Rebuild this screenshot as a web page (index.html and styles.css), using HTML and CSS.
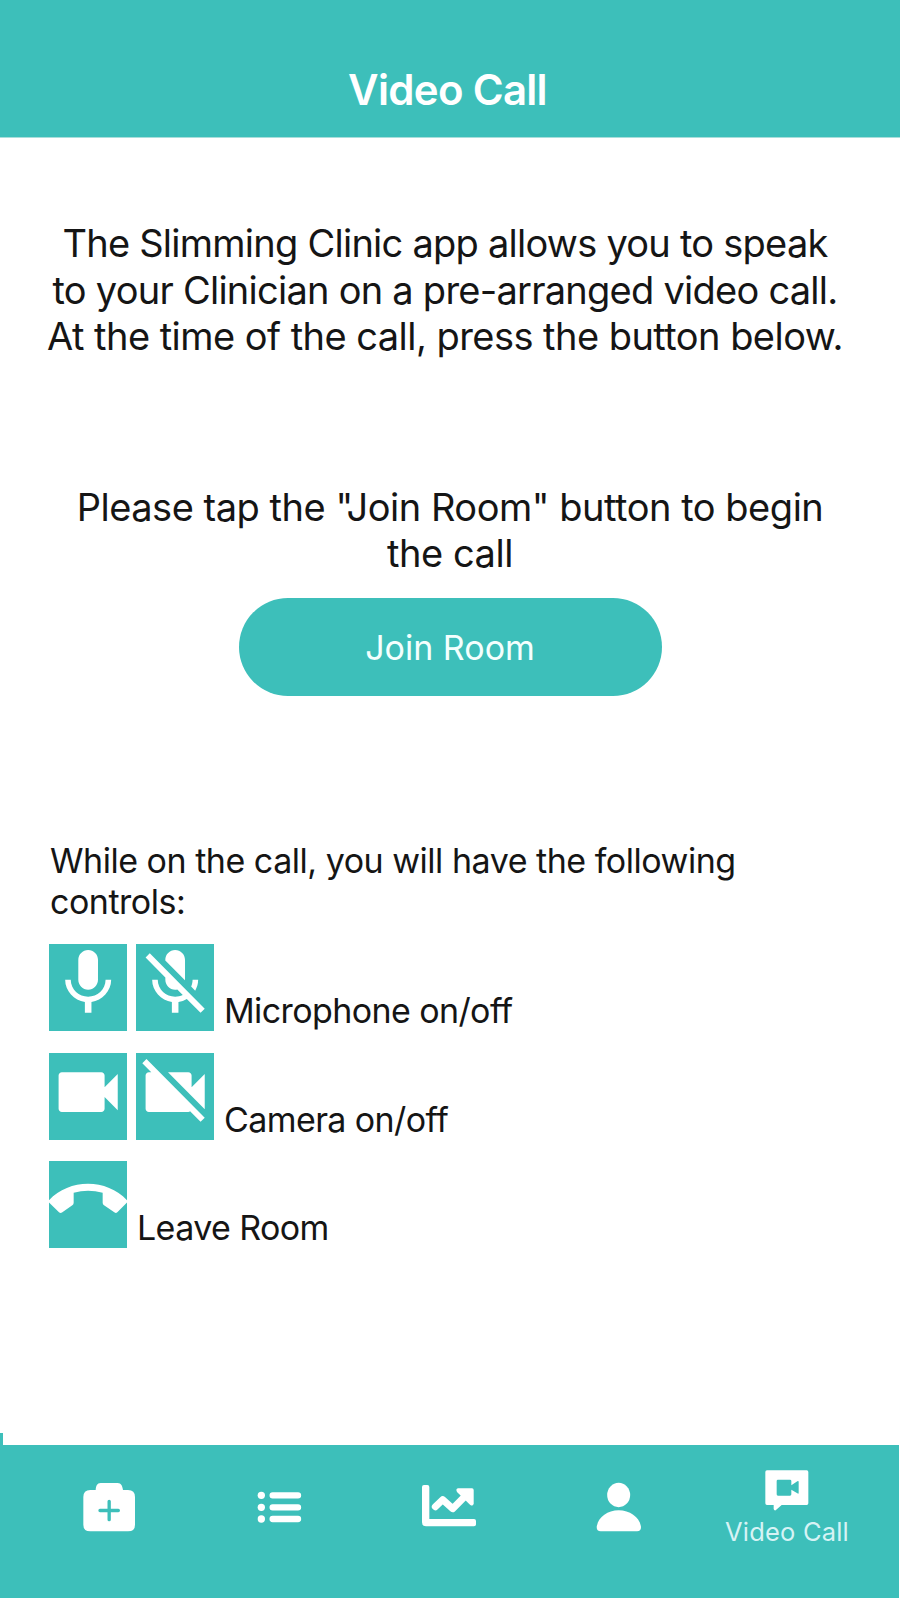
FILE: index.html
```html
<!DOCTYPE html>
<html lang="en">
<head>
<meta charset="utf-8">
<title>Video Call</title>
<link rel="stylesheet" href="styles.css">
</head>
<body>
<div class="screen">
  <header class="header"><h1 class="title">Video Call</h1></header>
  <main class="content">
    <p class="intro">The Slimming Clinic app allows you to speak<br>to your Clinician on a pre-arranged video call.<br><span class="closing">At the time of the call, press the button below.</span></p>
    <p class="prompt">Please tap the "Join Room" button to begin<br>the call</p>
    <button class="join" type="button">Join Room</button>
    <section class="controls">
      <p class="lead">While on the call, you will have the following<br>controls:</p>
      <div class="row">
        <svg class="tile" viewBox=".08 .18 23.74 26.3" preserveAspectRatio="none"><path d="M12 14c1.66 0 2.99-1.34 2.99-3L15 5c0-1.66-1.34-3-3-3S9 3.34 9 5v6c0 1.66 1.34 3 3 3zm5.3-3c0 3-2.54 5.1-5.3 5.1S6.7 14 6.7 11H5c0 3.41 2.72 6.23 6 6.72V21h2v-3.28c3.28-.48 6-3.3 6-6.72h-1.7z"/></svg>
        <svg class="tile" viewBox=".08 .18 23.74 26.3" preserveAspectRatio="none"><path d="M19 11h-1.7c0 .74-.16 1.43-.43 2.05l1.23 1.23c.56-.98.9-2.09.9-3.28zm-4.02.17c0-.06.02-.11.02-.17V5c0-1.66-1.34-3-3-3S9 3.34 9 5v.18l5.98 5.99zM4.27 3L3 4.27l6.01 6.01V11c0 1.66 1.33 3 2.99 3 .22 0 .44-.03.65-.08l1.66 1.66c-.71.33-1.5.52-2.31.52-2.76 0-5.3-2.1-5.3-5.1H5c0 3.41 2.72 6.23 6 6.72V21h2v-3.28c.91-.13 1.77-.45 2.54-.9L19.73 21 21 19.73 4.27 3z"/></svg>
        <span class="label">Microphone on/off</span>
      </div>
      <div class="row">
        <svg class="tile" viewBox=".08 .18 23.74 26.3" preserveAspectRatio="none"><path d="M17 10.500V7c0-.55-.45-1-1-1H4c-.55 0-1 .45-1 1v10c0 .55.45 1 1 1h12c.55 0 1-.45 1-1v-3.500l4 4v-11l-4 4z"/></svg>
        <svg class="tile" viewBox=".08 .18 23.74 26.3" preserveAspectRatio="none"><path d="M21 6.500l-4 4V7c0-.55-.45-1-1-1H9.820L21 17.180V6.500zM3.270 2L2 3.270 4.730 6H4c-.55 0-1 .45-1 1v10c0 .55.45 1 1 1h12c.21 0 .39-.08.54-.18L19.730 21 21 19.730 3.270 2z"/></svg>
        <span class="label">Camera on/off</span>
      </div>
      <div class="row">
        <svg class="tile" viewBox="57 363 234 260" preserveAspectRatio="none"><path d="M57 480C88 448 130 431 174 431S260 448 291 480V487L262 516Q258 520 254 517L222 495Q218 493 218 488V458Q174 446 131 458V488Q131 493 127 495L96 517Q91 520 87 516L57 487Z"/></svg>
        <span class="label">Leave Room</span>
      </div>
    </section>
  </main>
  <nav class="tabs">
    <a class="tab"><svg class="icon" viewBox="237 165 180 180"><path d="M287 210C288 198 291 189 302 189H353C364 189 367 198 369 210H384Q405 210 405 231V314Q405 334 384 334H271Q250 334 250 314V231Q250 210 271 210Z"/><path class="cut" d="M327.500 244V299M300 271.500H355"/></svg></a>
    <a class="tab"><svg class="icon" viewBox="87 165 180 180"><circle cx="124" cy="226" r="11"/><circle cx="124" cy="262" r="11"/><circle cx="124" cy="297" r="11"/><path class="bars" d="M158 226H234M158 262H234M158 297H234"/></svg></a>
    <a class="tab"><svg class="icon" viewBox="597 165 180 180"><path d="M612 195H622Q628 195 628 201V297H762Q768 297 768 303V313Q768 319 762 319H618Q606 319 606 307V201Q606 195 612 195Z"/><path class="trend" d="M646 260L668 239L698 266L738 226"/><path d="M714 205H756Q761 205 761 210V250Q760 261 750 254L711 216Q706 207 714 205Z"/></svg></a>
    <a class="tab"><svg class="icon" viewBox="567 165 180 180"><ellipse cx="656" cy="225" rx="34.500" ry="36.500"/><path d="M590 321C594 292 622 271 656 271S719 292 723 321Q723 334 711 334H602Q590 334 590 321Z"/></svg></a>
    <a class="tab active"><svg class="icon chat" viewBox="351 141 180 135"><path d="M381 151H500Q505 151 505 156V250Q505 255 500 255H425L407 271Q402 272 401 267V255H381Q376 255 376 250V156Q376 151 381 151Z"/><path class="lens" d="M414 179H450Q454 179 454 183V196L472 184Q476 182 476 186V218Q476 223 472 220L454 209V223Q454 227 450 227H414Q410 227 410 223V183Q410 179 414 179Z"/></svg><span class="tab-label">Video Call</span></a>
  </nav>
</div>
</body>
</html>
```
FILE: styles.css
```css
* { box-sizing: border-box; }
body { margin: 0; background: #fff; color: #151515; font-family: Inter, "Liberation Sans", sans-serif; }
p, h1 { margin: 0; white-space: nowrap; }
.screen { width: 900px; height: 1598px; display: flex; flex-direction: column; overflow: hidden; }
.header { height: 137px; padding-top: 63px; background: #3dbfba; color: #fff; box-shadow: 0 1px 0 #a9dedb; }
.title { width: 895px; text-align: center; font-size: 42px; line-height: 54px; font-weight: 600; letter-spacing: -.7px; }
.content { flex: 1; display: flex; flex-direction: column; align-items: center; }
.intro { width: 890px; margin-top: 83px; text-align: center; font-size: 38px; line-height: 46.500px; letter-spacing: -.75px; align-self: flex-start; }
.closing { letter-spacing: -.54px; }
.prompt { margin-top: 124px; text-align: center; font-size: 38px; line-height: 46.500px; letter-spacing: -.47px; }
.join { width: 423px; height: 98px; margin-top: 21.500px; padding: 0; border: 0; border-radius: 49px; background: #3dbfba; color: #f4fffe; font-family: inherit; font-size: 34px; letter-spacing: 0; }
.controls { align-self: stretch; padding-left: 49px; margin-top: 144px; }
.lead { margin-left: 1px; font-size: 34px; line-height: 41px; letter-spacing: -.48px; }
.row { display: flex; align-items: flex-end; height: 87px; margin-bottom: 21.500px; gap: 9px; font-size: 34px; }
.lead + .row { margin-top: 22px; }
.tile { width: 78px; height: 87px; background: #3dbfba; fill: #fff; }
.label { margin-left: 1px; line-height: 41px; letter-spacing: -.6px; white-space: nowrap; }
.tabs { height: 153px; width: 899px; background: #3dbfba; padding: 30px 0 0 24px; display: grid; grid-template-columns: repeat(5, 170px); position: relative; }
.tabs::before { content: ""; position: absolute; left: 0; top: -12px; width: 3px; height: 12px; background: #3dbfba; }
.tab { display: flex; flex-direction: column; align-items: center; }
.icon { width: 60px; height: 60px; fill: #fff; }
.cut { fill: none; stroke: #3dbfba; stroke-width: 10; stroke-linecap: round; }
.bars { stroke: #fff; stroke-width: 19; stroke-linecap: round; }
.trend { fill: none; stroke: #fff; stroke-width: 21; stroke-linecap: round; stroke-linejoin: round; }
.lens { fill: #3dbfba; }
.active { margin: -8px 4px 0 0; }
.chat { height: 45px; }
.tab-label { margin-top: 5px; color: #d6f3f5; font-size: 25.500px; line-height: 30px; letter-spacing: .2px; white-space: nowrap; }
```
